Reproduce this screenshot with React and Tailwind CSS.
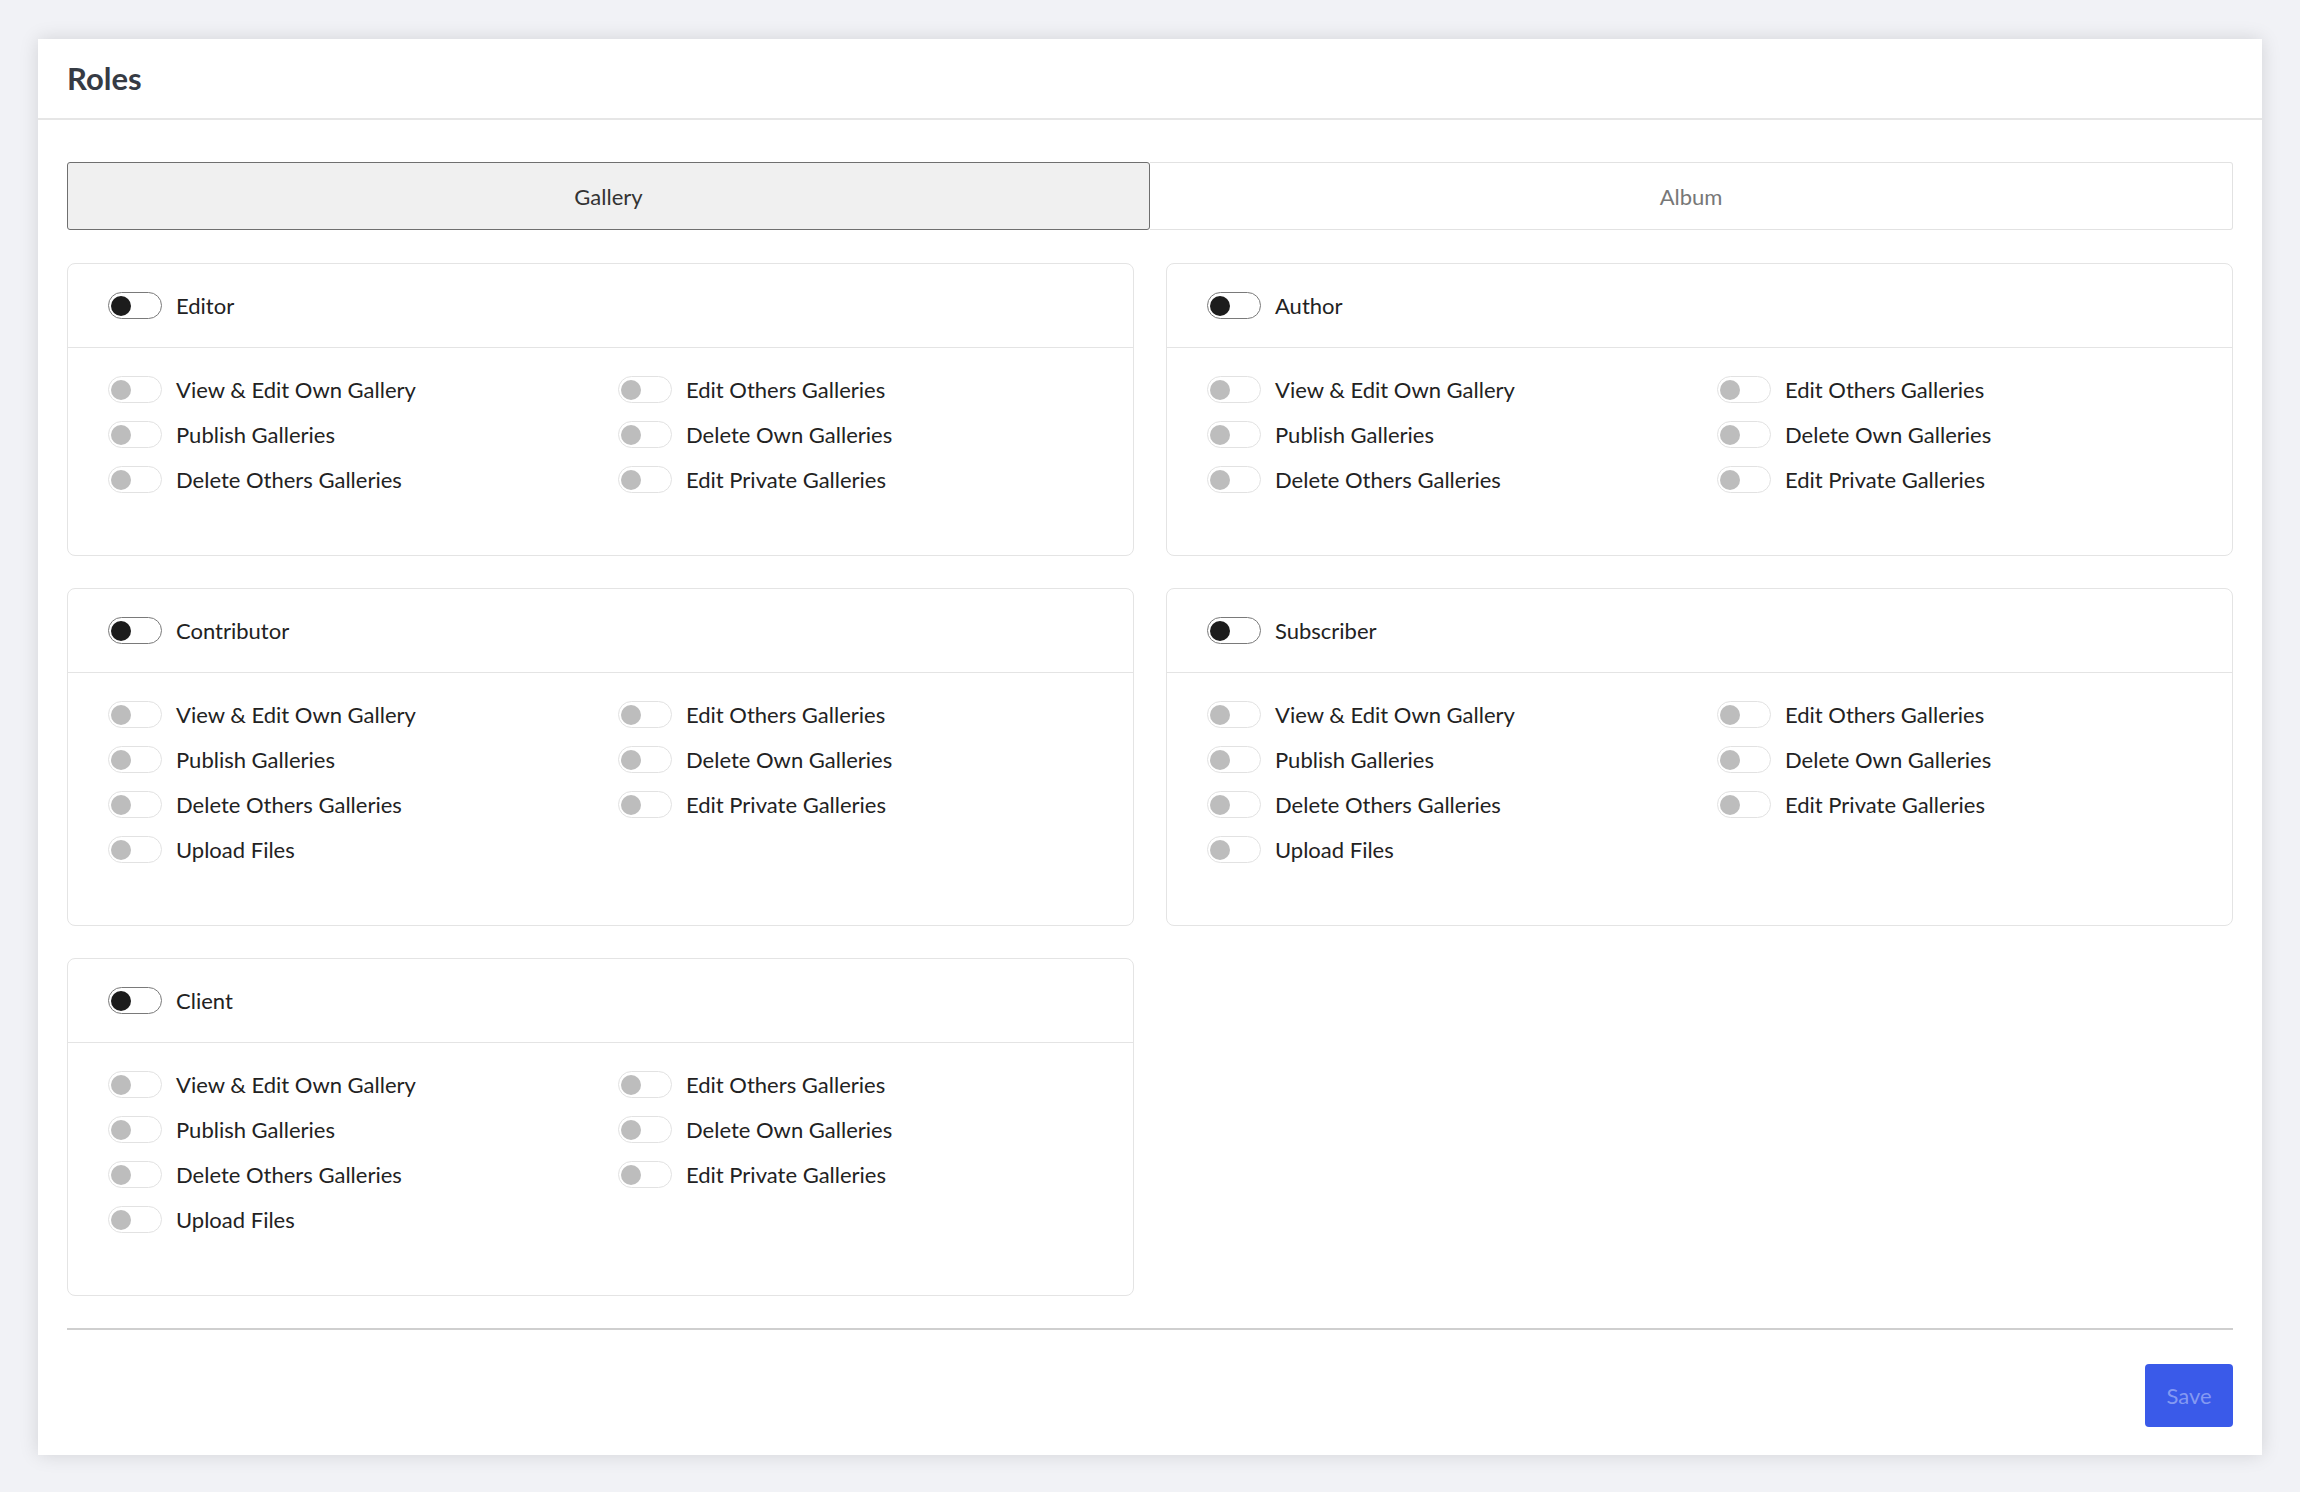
import React from "react";

const basePerms = [
  "View & Edit Own Gallery",
  "Edit Others Galleries",
  "Publish Galleries",
  "Delete Own Galleries",
  "Delete Others Galleries",
  "Edit Private Galleries",
];

const roles = [
  { name: "Editor", perms: basePerms },
  { name: "Author", perms: basePerms },
  { name: "Contributor", perms: [...basePerms, "Upload Files"] },
  { name: "Subscriber", perms: [...basePerms, "Upload Files"] },
  { name: "Client", perms: [...basePerms, "Upload Files"] },
];

function Toggle({ dark }) {
  return (
    <span
      className={
        dark
          ? "relative inline-flex w-[54px] h-[27px] shrink-0 rounded-full border-[1.5px] border-[#7a7a7a] bg-white items-center"
          : "relative inline-flex w-[54px] h-[27px] shrink-0 rounded-full border-[1.5px] border-[#e2e2e2] bg-white items-center"
      }
    >
      <span
        className={
          dark
            ? "ml-[2px] w-[20px] h-[20px] rounded-full bg-[#1c1c1c]"
            : "ml-[2px] w-[20px] h-[20px] rounded-full bg-[#bdbdbd]"
        }
      />
    </span>
  );
}

function RoleCard({ role }) {
  return (
    <div className="border border-[#e4e4e4] rounded-[8px] bg-white">
      <div className="h-[84px] pl-[40px] pr-[41px] flex items-center gap-[14px] border-b border-[#e4e4e4]">
        <Toggle dark />
        <span className="text-[22px] text-[#222]">{role.name}</span>
      </div>
      <div className="pl-[40px] pr-[41px] pt-[19px] pb-[53px] grid grid-cols-[510px_1fr]">
        {role.perms.map((p) => (
          <div key={p} className="h-[45px] flex items-center gap-[14px]">
            <Toggle />
            <span className="text-[22px] text-[#222]">{p}</span>
          </div>
        ))}
      </div>
    </div>
  );
}

export default function App() {
  return (
    <div
      className="min-h-screen bg-[#f1f2f6] px-[38px] pt-[39px] pb-[38px]"
      style={{ fontFamily: "Lato, 'Noto Sans', sans-serif" }}
    >
      <div className="bg-white shadow-[0_0_18px_rgba(0,0,0,0.13)]">
        {/* Header */}
        <div className="h-[81px] px-[29px] flex items-center border-b-2 border-[#e6e6e6]">
          <h1 className="text-[31px] font-bold text-[#363b44]">Roles</h1>
        </div>

        <div className="px-[29px] pt-[42px] pb-[28px]">
          {/* Tabs */}
          <div className="grid grid-cols-2 h-[68px]">
            <button className="bg-[#f0f0f0] border-[1.5px] border-[#6f6f6f] rounded-[3px] text-[22px] text-[#333]">
              Gallery
            </button>
            <button className="bg-white border-[1.5px] border-l-0 border-[#e2e2e2] rounded-r-[3px] text-[22px] text-[#777]">
              Album
            </button>
          </div>

          {/* Role cards */}
          <div className="grid grid-cols-2 gap-[32px] mt-[33px]">
            {roles.map((r) => (
              <RoleCard key={r.name} role={r} />
            ))}
          </div>

          <div className="mt-[32px] border-t-2 border-[#cfcfcf]" />

          <div className="flex justify-end mt-[34px]">
            <button className="w-[88px] h-[63px] rounded-[4px] bg-[#3a5ae9] text-[22px] text-[#8499f2]">
              Save
            </button>
          </div>
        </div>
      </div>
    </div>
  );
}
